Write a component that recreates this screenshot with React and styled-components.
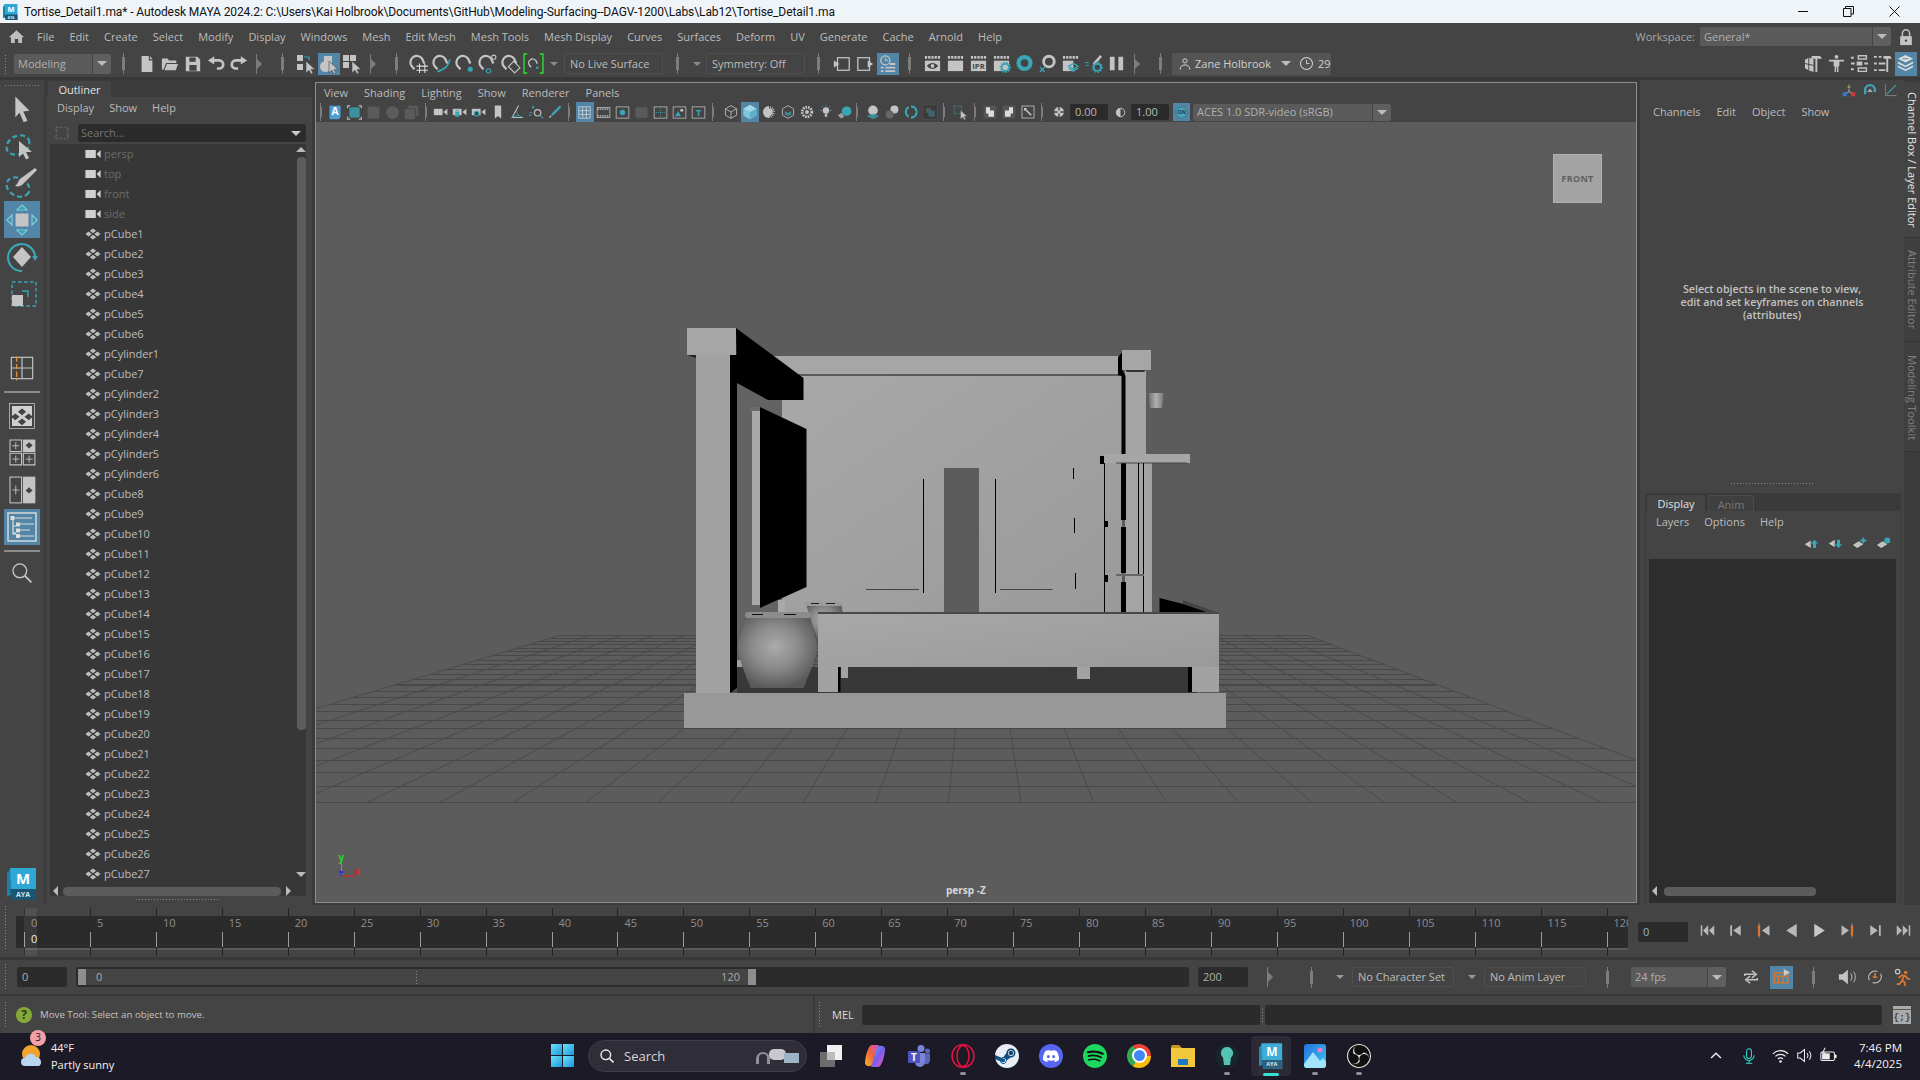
import React from "react";
import styled, { createGlobalStyle } from "styled-components";
import { SiDiscord, SiSpotify, SiSteam, SiObsstudio } from "react-icons/si";

const L = "#c4c4c4";
const T = "#3aa5b6";
const O = "#d9772f";

const GlobalStyle = createGlobalStyle`
  html, body { margin: 0; padding: 0; background: #444; overflow: hidden; }
  * { box-sizing: border-box; }
`;

const Page = styled.div`
  width: 1920px;
  height: 1080px;
  display: flex;
  flex-direction: column;
  overflow: hidden;
  background: #444;
  color: #bcbcbc;
  font: 11px/14px "Open Sans", sans-serif;
`;

/* window chrome */
const TitleBar = styled.div`
  flex: none;
  height: 23px;
  display: flex;
  align-items: center;
  padding-left: 3px;
  background: #eff4f9;
  color: #111;
  font: 12px/16px "Roboto", sans-serif;
`;
const TitleText = styled.span`
  margin-left: 6px;
  letter-spacing: -0.1px;
`;
const WinControls = styled.div`
  margin-left: auto;
  display: flex;
  margin-right: 20px;
  gap: 35px;
`;

const MenuBar = styled.div`
  flex: none;
  height: 26px;
  display: flex;
  align-items: center;
  padding: 1px 0 0 8px;
`;
const Menus = styled.div`
  display: flex;
  gap: ${(p) => p.$gap || 15}px;
  margin-left: ${(p) => p.$ml || 0}px;
  color: ${(p) => p.$color || "#bcbcbc"};
`;
const WorkspaceLabel = styled.span`
  margin-left: auto;
  color: #a8a8a8;
`;
const Dropdown = styled.div`
  flex: none;
  display: flex;
  width: ${(p) => p.$w}px;
  height: ${(p) => p.$h || 20}px;
  margin-left: ${(p) => p.$ml || 0}px;
  border-radius: 2px;
  overflow: hidden;
  color: #b0b0b0;
`;
const DropLabel = styled.div`
  flex: 1;
  display: flex;
  align-items: center;
  padding-left: 4px;
  background: #5a5a5a;
`;
const DropCaret = styled.div`
  flex: none;
  width: 18px;
  margin-left: 1px;
  display: flex;
  align-items: center;
  justify-content: center;
  background: #5f5f5f;
`;
const Caret = styled.div`
  flex: none;
  margin-left: ${(p) => p.$ml || 0}px;
  width: 0;
  height: 0;
  border-left: ${(p) => p.$s || 5}px solid transparent;
  border-right: ${(p) => p.$s || 5}px solid transparent;
  border-top: ${(p) => p.$s || 5}px solid ${(p) => p.$c || "#bbb"};
`;
const Lock = styled.div`
  margin: 0 5px 0 6px;
  display: flex;
`;

const Toolbar = styled.div`
  flex: none;
  height: 28px;
  display: flex;
  align-items: center;
  padding-top: 1px;
`;
const Grip = styled.div`
  flex: none;
  width: 3px;
  height: ${(p) => p.$h || 20}px;
  margin-left: ${(p) => p.$ml || 0}px;
  background-image: radial-gradient(#8a8a8a 0.7px, transparent 0.8px);
  background-size: 3px 3px;
`;
const HGrip = styled.div`
  flex: none;
  width: ${(p) => p.$w}px;
  height: 3px;
  margin: ${(p) => p.$m || "0"};
  background-image: radial-gradient(#858585 0.7px, transparent 0.8px);
  background-size: 3px 3px;
`;
const Sep = styled.div`
  flex: none;
  position: relative;
  width: ${(p) => p.$w || 3}px;
  height: ${(p) => p.$h || 13}px;
  margin-left: ${(p) => p.$ml || 0}px;
  background: #7c7c7c;
  &::after {
    content: "";
    position: absolute;
    left: ${(p) => ((p.$w || 3) === 3 ? 1 : 0)}px;
    top: -4px;
    bottom: -4px;
    width: 1px;
    background: #7c7c7c;
  }
`;
const Notch = styled.div`
  flex: none;
  position: relative;
  width: 8px;
  height: 20px;
  margin-left: ${(p) => p.$ml || 0}px;
  &::before {
    content: "";
    position: absolute;
    left: 1px;
    top: 0;
    bottom: 0;
    width: 1px;
    background: #7c7c7c;
  }
  &::after {
    content: "";
    position: absolute;
    left: 2px;
    top: 5px;
    border-left: 5px solid #7c7c7c;
    border-top: 5px solid transparent;
    border-bottom: 5px solid transparent;
  }
`;
const Tool = styled.div`
  flex: none;
  display: flex;
  align-items: center;
  justify-content: center;
  width: ${(p) => p.$w || 23}px;
  height: ${(p) => p.$h || 22}px;
  margin-left: ${(p) => p.$ml || 0}px;
`;
const ActiveBack = styled.div`
  display: flex;
  align-items: center;
  justify-content: center;
  width: ${(p) => p.$w}px;
  height: ${(p) => p.$h}px;
  background: #5285a6;
`;
const Group = styled.div`
  flex: none;
  display: flex;
  align-items: center;
  margin-left: ${(p) => p.$ml || 0}px;
  margin-right: ${(p) => p.$mr || 0}px;
`;
const FieldOutline = styled.div`
  flex: none;
  display: flex;
  align-items: center;
  width: ${(p) => p.$w}px;
  height: ${(p) => p.$h || 21}px;
  margin-left: ${(p) => p.$ml || 0}px;
  padding-left: 5px;
  border: 1px solid #4f4f4f;
  border-radius: 3px;
`;
const Profile = styled.div`
  flex: none;
  display: flex;
  align-items: center;
  width: 159px;
  height: 22px;
  margin-left: 10px;
  padding-left: 6px;
  background: #545454;
  color: #d0d0d0;
`;
const ProfileName = styled.span`
  margin-left: 3px;
  width: 86px;
`;
const Clock = styled.div`
  margin-left: 8px;
  display: flex;
`;
const ClockCount = styled.span`
  margin-left: 4px;
`;
const TopLine = styled.div`
  flex: none;
  height: 3px;
  background: #383838;
`;

/* main row */
const Main = styled.div`
  flex: none;
  height: 825px;
  display: flex;
  background: #3b3b3b;
`;
const Toolbox = styled.div`
  flex: none;
  width: 44px;
  margin-right: 2px;
  display: flex;
  flex-direction: column;
  align-items: center;
  background: #444;
  padding-top: 4px;
`;
const BoxSlot = styled.div`
  flex: none;
  width: 36px;
  height: ${(p) => p.$h || 36}px;
  margin-top: ${(p) => p.$mt || 0}px;
  display: flex;
  align-items: center;
  justify-content: center;
  background: ${(p) => (p.$on ? "#5285a6" : "transparent")};
`;
const BoxRule = styled.div`
  flex: none;
  width: 36px;
  height: 2px;
  margin-top: ${(p) => p.$mt || 0}px;
  background: #8a8a8a;
`;
const BoxLogo = styled.div`
  margin-top: auto;
  margin-bottom: 5px;
  display: flex;
`;

const Outliner = styled.div`
  flex: none;
  width: 266px;
  display: flex;
  flex-direction: column;
`;
const PanelTabs = styled.div`
  flex: none;
  height: ${(p) => p.$h}px;
  display: flex;
  align-items: flex-end;
  gap: 3px;
  padding-left: ${(p) => p.$pl || 0}px;
`;
const PanelTab = styled.div`
  height: 16px;
  width: ${(p) => p.$w}px;
  display: flex;
  align-items: center;
  justify-content: center;
  padding-top: 2px;
  border-radius: 3px 3px 0 0;
  background: ${(p) => (p.$on ? "#444" : "#3f3f3f")};
  color: ${(p) => (p.$on ? "#e2e2e2" : "#777")};
  border: ${(p) => (p.$on ? "none" : "1px solid #4c4c4c")};
  border-bottom: none;
`;
const OutlinerBody = styled.div`
  flex: 1;
  display: flex;
  flex-direction: column;
  background: #444;
`;
const PanelMenu = styled.div`
  flex: none;
  height: ${(p) => p.$h || 22}px;
  display: flex;
  align-items: center;
  padding-left: ${(p) => p.$pl}px;
`;
const SearchRow = styled.div`
  flex: none;
  height: 25px;
  display: flex;
  align-items: center;
  padding: 3px 0 0 8px;
`;
const SearchField = styled.div`
  width: 228px;
  height: 18px;
  margin-left: 8px;
  display: flex;
  align-items: center;
  justify-content: space-between;
  padding: 0 5px 0 3px;
  border-radius: 3px;
  background: #2b2b2b;
  color: #757575;
`;
const List = styled.div`
  position: relative;
  flex: none;
  width: 256px;
  height: 752px;
  margin-left: 4px;
  background: #373737;
  overflow: hidden;
`;
const Row = styled.div`
  height: 20px;
  display: flex;
  align-items: center;
  padding-left: 35px;
  color: ${(p) => (p.$dim ? "#6c6c6c" : "#bcbcbc")};
`;
const RowLabel = styled.span`
  margin-left: 3px;
`;
const VScroll = styled.div`
  position: absolute;
  top: 0;
  right: 0;
  bottom: 10px;
  width: 10px;
  background: #373737;
`;
const VThumb = styled.div`
  margin: 13px 0 0 0.5px;
  width: 9px;
  height: 573px;
  border-radius: 4px;
  background: #5c5c5c;
`;
const ArrowUp = styled.div`
  position: absolute;
  top: 3px;
  left: 0;
  border-left: 5px solid transparent;
  border-right: 5px solid transparent;
  border-bottom: 5px solid #bbb;
`;
const ArrowDown = styled.div`
  position: absolute;
  bottom: 9px;
  left: 0;
  border-left: 5px solid transparent;
  border-right: 5px solid transparent;
  border-top: 5px solid #bbb;
`;
const HScroll = styled.div`
  position: absolute;
  left: 0;
  right: ${(p) => p.$r ?? 10}px;
  bottom: ${(p) => p.$b || 0}px;
  height: 10px;
  display: flex;
  align-items: center;
  padding-left: 3px;
  gap: ${(p) => p.$gap || 5}px;
`;
const HThumb = styled.div`
  width: ${(p) => p.$w}px;
  height: 9px;
  border-radius: 4px;
  background: #5c5c5c;
`;
const ArrowLeft = styled.div`
  flex: none;
  border-top: 5px solid transparent;
  border-bottom: 5px solid transparent;
  border-right: 5px solid #bbb;
`;
const ArrowRight = styled.div`
  flex: none;
  border-top: 5px solid transparent;
  border-bottom: 5px solid transparent;
  border-left: 5px solid #bbb;
`;

const Viewport = styled.div`
  flex: none;
  width: 1322px;
  margin: 2px 0 2px 3px;
  display: flex;
  flex-direction: column;
  border: 1px solid #8d8d8d;
  background: #444;
`;
const ViewMenu = styled.div`
  flex: none;
  height: 19px;
  display: flex;
  align-items: center;
  padding-left: 8px;
`;
const ViewBar = styled.div`
  flex: none;
  height: 20px;
  display: flex;
  align-items: center;
  padding-left: 4px;
`;
const NumField = styled.div`
  flex: none;
  width: 38px;
  height: 16px;
  margin-left: ${(p) => p.$ml || 0}px;
  display: flex;
  align-items: center;
  padding-left: 5px;
  border-radius: 2px;
  background: #2b2b2b;
  color: #b8b8b8;
`;
const Canvas = styled.div`
  position: relative;
  flex: 1;
  background: #5c5c5c;
  overflow: hidden;
  svg {
    display: block;
  }
`;
const ViewCube = styled.div`
  position: absolute;
  top: 32px;
  right: 34px;
  width: 49px;
  height: 49px;
  display: flex;
  align-items: center;
  justify-content: center;
  background: #a3a3a3;
  border: 1px solid #b0b0b0;
  color: #606060;
  font-size: 9px;
  font-weight: 700;
  letter-spacing: 0.3px;
`;
const ViewName = styled.div`
  position: absolute;
  left: 630px;
  bottom: 5px;
  color: #d8d8d8;
  font-size: 10px;
  font-weight: 700;
`;

const RightPanel = styled.div`
  flex: none;
  width: 264px;
  margin-left: 3px;
  display: flex;
  flex-direction: column;
  background: #444;
`;
const ChannelBox = styled.div`
  flex: none;
  height: 413px;
  display: flex;
  flex-direction: column;
  align-items: stretch;
`;
const ChannelIcons = styled.div`
  flex: none;
  height: 20px;
  display: flex;
  align-items: center;
  justify-content: flex-end;
  gap: 7px;
  padding-right: 6px;
`;
const ChannelHint = styled.div`
  margin-top: 159px;
  text-align: center;
  font-size: 10.7px;
  font-weight: 600;
  line-height: 13px;
  color: #c2c2c2;
`;
const LayerBox = styled.div`
  flex: 1;
  display: flex;
  flex-direction: column;
  margin: 0 3px 2px 5px;
  background: #3a3a3a;
`;
const LayerBody = styled.div`
  flex: 1;
  display: flex;
  flex-direction: column;
  background: #444;
  border-left: 1px solid #3a3a3a;
  border-right: 1px solid #3a3a3a;
`;
const LayerIcons = styled.div`
  flex: none;
  height: 26px;
  padding: 0 9px 5px 0;
  display: flex;
  align-items: center;
  justify-content: flex-end;
  gap: 9px;
`;
const LayerList = styled.div`
  position: relative;
  flex: 1;
  margin: 0 4px 0 3px;
  background: #2d2d2d;
`;
const VTabs = styled.div`
  flex: none;
  width: 16px;
  padding-top: 2px;
  display: flex;
  flex-direction: column;
  background: #3b3b3b;
`;
const VTab = styled.div`
  flex: none;
  height: ${(p) => p.$h}px;
  padding-top: ${(p) => p.$pt}px;
  writing-mode: vertical-rl;
  display: flex;
  align-items: center;
  border-radius: 0 3px 3px 0;
  background: ${(p) => (p.$on ? "#444" : "#3f3f3f")};
  border-bottom: 1px solid #333;
  color: ${(p) => (p.$on ? "#e4e4e4" : "#808080")};
  white-space: nowrap;
`;

/* timeline */
const TimeRow = styled.div`
  flex: none;
  height: 52px;
  display: flex;
  align-items: flex-start;
`;
const Ruler = styled.div`
  position: relative;
  flex: none;
  width: 1612px;
  height: 48px;
  margin: 3px 0 0 9px;
  overflow: hidden;
  color: #8e8e8e;
`;
const RulerLine = styled.div`
  display: flex;
  height: ${(p) => p.$h}px;
  padding-left: 8px;
  background: ${(p) => p.$bg};
`;
const StripCell = styled.div`
  flex: 0 0 65.95px;
  height: 100%;
  border-left: 1px solid #222;
  background: ${(p) => (p.$bar ? "linear-gradient(#5a5a5a 0 2px, transparent 2px)" : "none")};
`;
const RulerCell = styled.div`
  position: relative;
  flex: 0 0 65.95px;
  padding-left: 7px;
  &::after {
    content: "";
    position: absolute;
    left: 0;
    bottom: 1px;
    width: 1px;
    height: 15px;
    background: #9c9c9c;
  }
`;
const CurrentMark = styled.div`
  position: absolute;
  left: 8px;
  top: 0;
  bottom: 0;
  width: 13px;
  background: rgba(255, 255, 255, 0.07);
`;
const CurrentLabel = styled.div`
  position: absolute;
  left: 15px;
  top: 24px;
  color: #eee;
`;
const FrameField = styled.div`
  flex: none;
  width: 50px;
  height: 20px;
  margin-left: ${(p) => p.$ml || 0}px;
  margin-top: ${(p) => p.$mt || 0}px;
  display: flex;
  align-items: center;
  padding-left: 5px;
  border-radius: 2px;
  background: #2b2b2b;
  color: ${(p) => p.$c || "#b0b0b0"};
`;
const Transport = styled.div`
  flex: none;
  display: flex;
  margin: 15px 0 0 5px;
`;
const RangeRow = styled.div`
  flex: none;
  height: 37px;
  display: flex;
  align-items: center;
  border-top: 3px solid #383838;
`;
const RangeTrack = styled.div`
  flex: none;
  width: 1113px;
  height: 20px;
  margin-left: 9px;
  padding: 2px 0 2px 2px;
  border-radius: 2px;
  background: #2b2b2b;
`;
const RangeBar = styled.div`
  width: 678px;
  height: 16px;
  display: flex;
  align-items: center;
  justify-content: space-between;
  background: #444;
`;
const RangeHandle = styled.div`
  flex: none;
  width: 8px;
  height: 16px;
  background: #8e8e8e;
`;
const RangeValue = styled.span`
  margin: ${(p) => p.$m};
  color: #aaa;
`;
const CommandRow = styled.div`
  flex: none;
  height: 39px;
  display: flex;
  align-items: center;
  border-top: 2px solid #383838;
`;
const HelpLine = styled.div`
  flex: none;
  width: 815px;
  height: 37px;
  display: flex;
  align-items: center;
  padding-left: 4px;
  border-right: 2px solid #383838;
  margin-right: 3px;
`;
const HelpDot = styled.div`
  flex: none;
  width: 16px;
  height: 16px;
  margin-left: 9px;
  display: flex;
  align-items: center;
  justify-content: center;
  border-radius: 50%;
  background: #86a83a;
  color: #2c3a10;
  font-size: 12px;
  font-weight: 700;
`;
const HelpText = styled.span`
  margin-left: 8px;
  font-size: 9.7px;
  color: #c2c2c2;
`;
const MelLabel = styled.span`
  margin-left: 11px;
  color: #ddd;
`;
const MelInput = styled.div`
  flex: none;
  width: ${(p) => p.$w}px;
  height: 20px;
  margin-left: ${(p) => p.$ml || 0}px;
  border-radius: 2px;
  background: #2b2b2b;
`;

/* windows taskbar */
const Taskbar = styled.div`
  flex: 1;
  display: flex;
  align-items: center;
  padding-bottom: 2px;
  background: #1c1a26;
  color: #f2f2f2;
`;
const Weather = styled.div`
  position: relative;
  flex: none;
  width: 551px;
  display: flex;
  align-items: center;
  padding-left: 20px;
  line-height: 17px;
`;
const Badge = styled.div`
  position: absolute;
  left: 30px;
  top: -9px;
  width: 16px;
  height: 16px;
  display: flex;
  align-items: center;
  justify-content: center;
  border-radius: 50%;
  background: #f4a0a8;
  color: #2a1a1e;
  font-size: 10px;
`;
const WeatherText = styled.div`
  margin-left: 7px;
`;
const StartGrid = styled.div`
  flex: none;
  width: 23px;
  height: 23px;
  display: grid;
  grid-template-columns: 1fr 1fr;
  gap: 1px;
`;
const StartPane = styled.div`
  background: linear-gradient(135deg, #6ee0f8, #1a9ade);
`;
const SearchPill = styled.div`
  flex: none;
  width: 219px;
  height: 32px;
  margin-left: 14px;
  display: flex;
  align-items: center;
  padding-left: 11px;
  border: 1px solid #3d3c47;
  border-radius: 16px;
  background: #2e2d38;
  color: #d8d8d8;
  font-size: 13px;
`;
const PillLabel = styled.span`
  margin-left: 10px;
  width: 130px;
`;
const TaskIcons = styled.div`
  flex: none;
  display: flex;
  margin-left: 2px;
`;
const TaskIcon = styled.div`
  position: relative;
  flex: none;
  width: 44px;
  height: 42px;
  display: flex;
  align-items: center;
  justify-content: center;
  &::before {
    content: "";
    position: absolute;
    inset: 1px 2px;
    border-radius: 4px;
    background: ${(p) => (p.$on ? "rgba(255,255,255,0.07)" : "transparent")};
  }
`;
const TaskDot = styled.div`
  position: absolute;
  left: 50%;
  bottom: ${(p) => (p.$on ? 1 : 2)}px;
  width: ${(p) => (p.$on ? 16 : 6)}px;
  height: 3px;
  margin-left: ${(p) => (p.$on ? -8 : -3)}px;
  border-radius: 2px;
  background: ${(p) => (p.$on ? "#35e0d0" : "#8f8f96")};
`;
const Tray = styled.div`
  flex: none;
  margin-left: ${(p) => p.$ml}px;
  display: flex;
`;
const TimeBlock = styled.div`
  flex: none;
  width: 50px;
  margin-left: 15px;
  text-align: right;
  font-size: 11.5px;
  line-height: 16px;
`;
const ChromeBall = styled.div`
  position: relative;
  width: 24px;
  height: 24px;
  border-radius: 50%;
  background: conic-gradient(from -30deg, #ea4335 0 120deg, #fbbc05 120deg 240deg, #34a853 240deg 360deg);
  &::after {
    content: "";
    position: absolute;
    inset: 6.5px;
    border-radius: 50%;
    background: #4285f4;
    box-shadow: 0 0 0 2px #fff;
  }
`;
const RoundIcon = styled.div`
  width: 24px;
  height: 24px;
  display: flex;
  align-items: center;
  justify-content: center;
  border-radius: 50%;
  background: ${(p) => p.$bg};
`;

const cursor = <path d="M10 7v12l3-2.7 2 3.7 2-1-2-3.6h4z" fill={L} stroke="#444" strokeWidth=".6" />;
const clap = <path d="M2 3.5H18" stroke={L} strokeWidth="3" strokeDasharray="2.4 1" />;
const cam = (
  <>
    <rect x="1" y="6" width="11" height="8" fill={L} />
    <path d="M13 10l5-4v8z" fill={L} />
  </>
);
const magnet = <path d="M6.2 15.5 3.4 12.4A6 6 0 1 1 13.4 5.4L15.6 10" fill="none" stroke={L} strokeWidth="2.1" />;
const gear = (c) => (
  <>
    <circle cx="14" cy="14" r="3.8" fill="none" stroke={c} strokeWidth="2" />
    <circle cx="14" cy="14" r="5.3" fill="none" stroke={c} strokeWidth="1.2" strokeDasharray="1.6 1.6" />
  </>
);

const ICONS = {
  home: <path d="M10 2.5 1 11h2.5v6.5H8V13h4v4.5h4.5V11H19z" fill="#bdbdbd" />,
  fnew: <path d="M4 1h8v5h4v13H4zM13.2 1l3 3.6h-3z" fill={L} />,
  fopen: <path d="M1 4h6l2 2h8v3H5.5L3 16H1zM6.5 10H19l-2.6 7H3.8z" fill={L} />,
  fsave: <path fillRule="evenodd" d="M2 2h13l3 3v13H2zM6 2.8v4.7h7V2.8zM6 11v6.5h8V11z" fill={L} />,
  undo: (
    <>
      <path d="M7 6h6.5a4.5 4.5 0 0 1 0 9H11" stroke={L} strokeWidth="3" fill="none" />
      <path d="M8 1.5v9L1 6z" fill={L} />
    </>
  ),
  redo: (
    <g transform="matrix(-1 0 0 1 20 0)">
      <path d="M7 6h6.5a4.5 4.5 0 0 1 0 9H11" stroke={L} strokeWidth="3" fill="none" />
      <path d="M8 1.5v9L1 6z" fill={L} />
    </g>
  ),
  selHier: (
    <>
      <rect x="1" y="1" width="6" height="6" fill={L} />
      <rect x="1" y="10" width="6" height="6" fill={L} />
      <path d="M8 3h5v3" fill="none" stroke={T} strokeWidth="1.2" />
      {cursor}
    </>
  ),
  selObj: (
    <>
      <circle cx="6.5" cy="12.5" r="5.5" fill={L} />
      <rect x="5" y="2" width="8" height="7" fill={L} />
      {cursor}
    </>
  ),
  selComp: (
    <>
      <path d="M1 1h6v6H1zM8 1h6v6H8zM1 8h6v6H1z" fill={L} />
      {cursor}
    </>
  ),
  snapGrid: (
    <>
      {magnet}
      <path d="M11 10v9M16 10v9M8 12.5h11M8 16.5h11" stroke="#ddd" strokeWidth="1" />
    </>
  ),
  snapCurve: (
    <>
      {magnet}
      <path d="M6 18c3-2 10-2 12-12" fill="none" stroke={T} strokeWidth="1.6" />
    </>
  ),
  snapPoint: (
    <>
      {magnet}
      <circle cx="15.5" cy="15.5" r="2.4" fill={T} />
    </>
  ),
  snapView: (
    <>
      {magnet}
      <circle cx="16" cy="4" r="2" fill="none" stroke={L} />
      <circle cx="11" cy="17" r="2" fill="none" stroke={T} />
    </>
  ),
  snapSurf: (
    <>
      {magnet}
      <path d="M8 13l5-5 6 6-5 5z" fill="none" stroke={L} strokeWidth="1.1" />
    </>
  ),
  snapLive: (
    <>
      <path d="M4 1H1v18h3M16 1h3v18h-3" fill="none" stroke="#2fe02f" strokeWidth="1.3" />
      <g transform="translate(4 4) scale(.62)">{magnet}</g>
      <circle cx="13.5" cy="14" r="1.2" fill={T} />
    </>
  ),
  frameIn: (
    <>
      <rect x="5" y="3" width="13" height="14" fill="none" stroke={L} strokeWidth="1.4" />
      <path d="M1 6l6 4-6 4z" fill={L} />
    </>
  ),
  frameOut: (
    <>
      <rect x="2" y="3" width="13" height="14" fill="none" stroke={L} strokeWidth="1.4" />
      <path d="M13 6l6 4-6 4z" fill={L} />
    </>
  ),
  history: (
    <>
      <circle cx="7" cy="6" r="5" fill="none" stroke={L} strokeWidth="1.4" />
      <path d="M7 3v3h3" fill="none" stroke={L} />
      <path d="M2 13h3v2H2zM7 13h11v2H7zM2 17h3v2H2zM7 17h11v2H7zM12 9h6v2h-6z" fill={L} />
    </>
  ),
  clapEye: (
    <>
      {clap}
      <rect x="2" y="7" width="16" height="11" fill={L} />
      <path d="M4 12.5c4-4 8-4 12 0-4 4-8 4-12 0z" fill="#444" />
      <circle cx="10" cy="12.5" r="2" fill={L} />
    </>
  ),
  clapBlank: (
    <>
      {clap}
      <rect x="2" y="7" width="16" height="11" fill={L} />
    </>
  ),
  clapIpr: (
    <>
      {clap}
      <rect x="2" y="7" width="16" height="11" fill={L} />
      <text x="10" y="16" textAnchor="middle" fontSize="8" fontFamily="Open Sans" fontWeight="700" fill="#444">IPR</text>
    </>
  ),
  clapGear: (
    <>
      {clap}
      <rect x="2" y="7" width="16" height="11" fill={L} />
      {gear(T)}
    </>
  ),
  ringT: <circle cx="10" cy="9.5" r="6.3" fill="none" stroke={T} strokeWidth="4.4" />,
  ringX: (
    <>
      <circle cx="11.5" cy="8" r="5.6" fill="none" stroke={L} strokeWidth="3" />
      <path d="M2 14l5 5M7 14l-5 5" stroke={T} strokeWidth="1.3" />
    </>
  ),
  clapTeal: (
    <>
      {clap}
      <rect x="2" y="7" width="11" height="11" fill={L} />
      <path d="M8 13l5-3 5 3-5 3zM8 15l5 3 5-3" fill="none" stroke={T} strokeWidth="1.5" />
    </>
  ),
  wrench: (
    <>
      <path d="M17 1l2 2-8 9-2-2z" fill={L} />
      <path d="M1 9h4M2 12h3" stroke={T} />
      {gear(T)}
    </>
  ),
  pause: <path d="M3 3h5v14H3zM12 3h5v14h-5z" fill={L} />,
  person: (
    <>
      <circle cx="10" cy="5.5" r="3" fill="none" stroke="#d4d4d4" strokeWidth="1.4" />
      <path d="M3 18c0-9 14-9 14 0" fill="none" stroke="#d4d4d4" strokeWidth="1.4" />
    </>
  ),
  clock: (
    <>
      <circle cx="10" cy="10" r="8" fill="none" stroke="#d4d4d4" strokeWidth="1.4" />
      <path d="M10 5v5h4" fill="none" stroke="#d4d4d4" strokeWidth="1.2" />
    </>
  ),
  lock: (
    <>
      <path d="M6 9V6a4 4 0 0 1 8 0v3" fill="none" stroke={L} strokeWidth="1.6" />
      <rect x="3.5" y="9" width="13" height="10" fill={L} />
      <circle cx="10" cy="14" r="1.3" fill="#444" />
    </>
  ),
  modelRel: (
    <>
      <path d="M1 6l4-2 5 1v14l-5-2-4-2z" fill={L} />
      <path d="M5 4v13M1 10l9 2" stroke="#444" />
      <path d="M8 2h9l2 3h-5v14h-2V5H8z" fill={L} />
    </>
  ),
  human: (
    <>
      <circle cx="10" cy="3" r="2" fill={L} />
      <path d="M2 6h16v2h-5v5h-1v6h-1.5v-5h-1v5H8v-6H7V8H2z" fill={L} />
    </>
  ),
  sliders: (
    <>
      <path d="M1 3h3v2H1zM8 1h10v5H8zM9.5 2.5h7v2h-7z" fill={L} fillRule="evenodd" />
      <path d="M1 9h4v2H1zM7 8h6v4H7zM15 9h4v2h-4z" fill={L} />
      <path d="M1 15h3v2H1zM8 14h10v5H8zM9.5 15.5h7v2h-7z" fill={L} fillRule="evenodd" />
    </>
  ),
  tools: (
    <>
      <path d="M1 2h3v2H1zM1 9h3v2H1zM1 16h3v2H1zM6 2h3v2H6zM6 9h7v2H6zM6 16h7v2H6z" fill={L} />
      <path d="M11 2h7l2 3h-4v14h-2V5h-3z" fill={L} />
    </>
  ),
  layersOn: (
    <>
      <path d="M10 1l8 4-8 4-8-4z" fill="#ddd" />
      <path d="M2 8l8 4 8-4v2l-8 4-8-4zM2 12l8 4 8-4v2l-8 4-8-4z" fill="#ddd" />
      <path d="M7 5h6" stroke="#5285a6" />
    </>
  ),
  aBtn: (
    <>
      <path d="M3 2h13v13l-2 3H3z" fill="#4e9ed2" />
      <text x="9.5" y="13" textAnchor="middle" fontSize="12" fontWeight="700" fontFamily="Open Sans" fill="#fff">A</text>
    </>
  ),
  frame: (
    <>
      <rect x="4" y="4" width="12" height="12" fill={T} opacity=".8" />
      <path d="M2 5V2h3M15 2h3v3M18 15v3h-3M5 18H2v-3" fill="none" stroke={L} strokeWidth="1.3" />
    </>
  ),
  dimBox: <rect x="3" y="3" width="14" height="14" fill="#5b5b5b" />,
  dimCircle: <circle cx="10" cy="10" r="7.5" fill="#5c5c5c" />,
  dimStack: <path d="M2 6h12v12H2zM6 2h12v12h-3V5H6z" fill="#5a5a5a" />,
  cam,
  camLock: (
    <>
      {cam}
      <rect x="4" y="10" width="5" height="6" fill={T} />
      <path d="M5 10V8h3v2" fill="none" stroke={T} />
    </>
  ),
  camGear: (
    <>
      {cam}
      <circle cx="7" cy="12" r="3" fill="#444" stroke={T} strokeWidth="1.4" />
    </>
  ),
  bookmark: <path d="M6 2h8v16l-4-3-4 3z" fill={L} />,
  persp: (
    <>
      <path d="M12 2l-8 15h13" fill="none" stroke={L} strokeWidth="1.3" />
      <path d="M3 17l8-3 7 3M9 9l3 6" stroke={T} fill="none" />
    </>
  ),
  focus: (
    <>
      <circle cx="12" cy="11" r="4" fill="none" stroke={L} strokeWidth="1.5" />
      <path d="M15 14l4 4M8 4h-2M6 2v4M2 11h3M1 14h3" stroke={T} strokeWidth="1.3" />
    </>
  ),
  pen: (
    <>
      <path d="M16 2l2 2-10 10-3 1 1-3z" fill={T} />
      <path d="M3 17l2-2" stroke={L} strokeWidth="1.5" />
    </>
  ),
  gridB: (
    <>
      <rect x="2.5" y="2.5" width="15" height="15" fill="none" stroke="#ddd" />
      <path d="M7.5 3v14M12.5 3v14M3 7.5h14M3 12.5h14" stroke="#ddd" />
    </>
  ),
  film: (
    <>
      <rect x="1.5" y="3.5" width="17" height="13" fill="none" stroke={L} />
      <path d="M2 5.5h16M2 14.5h16" stroke={L} strokeWidth="1.4" strokeDasharray="2 1" />
    </>
  ),
  resGate: (
    <>
      <rect x="1.5" y="2.5" width="17" height="15" fill="none" stroke={L} />
      <circle cx="10" cy="10" r="3.6" fill={T} />
    </>
  ),
  darkBox: <rect x="2" y="3" width="16" height="14" rx="2" fill="#5a5a5a" />,
  axisBox: (
    <>
      <rect x="1.5" y="2.5" width="17" height="15" fill="none" stroke={L} />
      <path d="M10 4v12M4 10h12" stroke={T} strokeDasharray="1.4 1.2" />
    </>
  ),
  picBox: (
    <>
      <rect x="1.5" y="2.5" width="17" height="15" fill="none" stroke={L} />
      <path d="M4 15l4-7 4 7z" fill={T} />
      <circle cx="13" cy="7" r="2" fill={L} />
    </>
  ),
  tBox: (
    <>
      <rect x="1.5" y="2.5" width="17" height="15" fill="none" stroke={L} />
      <text x="10" y="15" textAnchor="middle" fontSize="12" fontWeight="700" fontFamily="Open Sans" fill={T}>T</text>
    </>
  ),
  wire: <path d="M10 2l7 4v8l-7 4-7-4V6zM3 6l7 4 7-4M10 10v8" fill="none" stroke={L} strokeWidth="1" />,
  shade: (
    <>
      <path d="M10 1l8 4.5v9L10 19l-8-4.5v-9z" fill="#9fd9e8" />
      <path d="M2 5.5L10 10v9l-8-4.5z" fill="#7ec5d8" />
      <path d="M18 5.5L10 10v9l8-4.5z" fill="#5fb0c6" />
    </>
  ),
  halfDots: (
    <>
      <circle cx="10" cy="10" r="7.5" fill={L} />
      <path d="M10 3a7 7 0 0 1 0 14" fill="none" stroke="#444" strokeWidth="5" strokeDasharray="1.5 1.2" />
    </>
  ),
  boxDots: (
    <>
      <path d="M10 2l7 4v8l-7 4-7-4V6z" fill="none" stroke={L} />
      <path d="M6 9l4 2 4-2v4l-4 2-4-2z" fill={T} opacity=".7" />
    </>
  ),
  checker: (
    <>
      <circle cx="10" cy="10" r="6" fill="none" stroke={L} strokeWidth="3.6" strokeDasharray="2 1.2" />
      <circle cx="10" cy="10" r="2.4" fill={L} />
    </>
  ),
  bulb: (
    <>
      <circle cx="10" cy="8" r="4" fill={L} />
      <path d="M8.5 12h3v4h-3z" fill={L} />
      <path d="M10 1v1M3 8h2M15 8h2M5 3l1 1M15 3l-1 1" stroke={T} strokeWidth="1.3" />
    </>
  ),
  shadow: (
    <>
      <circle cx="12" cy="9" r="6" fill={T} />
      <path d="M1 14l5-3 3 5-4 2z" fill={L} opacity=".7" />
    </>
  ),
  ball: (
    <>
      <circle cx="10" cy="8" r="6" fill={L} />
      <path d="M2 15l8 4 8-4-8-3z" fill={T} opacity=".7" />
    </>
  ),
  ball2: (
    <>
      <circle cx="13" cy="7" r="5" fill={L} />
      <circle cx="7" cy="13" r="5" fill="#666" />
    </>
  ),
  ringSplit: <path d="M10 3a7 7 0 0 1 0 14M7 16a7 7 0 0 1 0-12" fill="none" stroke={T} strokeWidth="2.6" />,
  xray: (
    <>
      <rect x="1" y="1" width="18" height="18" fill="#3a3a3a" stroke="#505050" />
      <path d="M5 5h6v6H5z" fill="#565656" />
      <rect x="8" y="8" width="8" height="8" fill="#3f6670" />
    </>
  ),
  dashCursor: (
    <>
      <rect x="1.5" y="1.5" width="10" height="10" fill="none" stroke={T} strokeDasharray="2 1.5" />
      {cursor}
    </>
  ),
  isoA: (
    <>
      <rect x="2" y="2" width="16" height="16" fill="#555" />
      <path d="M10 4H5v8h3v4h7V8h-5z" fill="#ddd" />
    </>
  ),
  isoB: (
    <>
      <rect x="2" y="2" width="16" height="16" fill="#555" />
      <path d="M15 4h-5v4H5v8h7v-4h3z" fill="#ddd" />
    </>
  ),
  isoC: (
    <>
      <rect x="2.5" y="2.5" width="15" height="15" fill="#444" stroke={L} />
      <path d="M6 6l8 8" stroke={L} strokeWidth="2" />
      <path d="M5 5h4L5 9z" fill={L} />
    </>
  ),
  aperture: (
    <>
      <circle cx="10" cy="10" r="7" fill={L} />
      <path d="M10 3v5M17 10h-5M10 17v-5M3 10h5" stroke="#444" strokeWidth="2" />
    </>
  ),
  half: (
    <>
      <circle cx="10" cy="10" r="6.5" fill="none" stroke={L} strokeWidth="1.5" />
      <path d="M10 3.5a6.5 6.5 0 0 0 0 13z" fill={L} />
    </>
  ),
  onBtn: (
    <>
      <circle cx="10" cy="10" r="7.5" fill="#4aa3b5" stroke="#2d6c7c" />
      <text x="10" y="12.6" textAnchor="middle" fontSize="7" fontWeight="700" fontFamily="Open Sans" fill="#193c46">ON</text>
    </>
  ),
  triAxis: (
    <>
      <path d="M10 8v4M5 16l5-4 5 4" stroke="#ddd" fill="none" />
      <path d="M10 1l2.4 6H7.6z" fill="#7aa83c" />
      <path d="M1 13h6v6H1z" fill="#3a73c9" />
      <path d="M13 13h6v6h-6z" fill="#c8403c" />
    </>
  ),
  tealArc: (
    <>
      <path d="M3 16V10a7 7 0 0 1 14 0v3" fill="none" stroke={T} strokeWidth="3.4" />
      <path d="M10 8l4 5h-8z" fill="#aaa" />
    </>
  ),
  corner: (
    <>
      <path d="M2 2v16h16" fill="none" stroke="#999" />
      <path d="M4 16L17 3" stroke={T} strokeWidth="1.6" />
    </>
  ),
  layerUp: (
    <>
      <path d="M1 11l8-5v10z" fill={L} />
      <path d="M9 10l5-5 5 5h-3v6h-4v-6z" fill={T} />
    </>
  ),
  layerDown: (
    <>
      <path d="M1 10l8-5v10z" fill={L} />
      <path d="M12 5h4v6h3l-5 5-5-5h3z" fill={T} />
    </>
  ),
  layerAdd: (
    <>
      <path d="M1 12l8-5 6 4-8 5z" fill={L} />
      <path d="M15 2v8M11 6h8" stroke={T} strokeWidth="2.4" />
    </>
  ),
  layerDot: (
    <>
      <path d="M1 12l8-5 6 4-8 5z" fill={L} />
      <circle cx="15" cy="6" r="4" fill={T} />
    </>
  ),
  tFirst: <path d="M1 3h2v14H1zM11 3v14L4 10zM19 3v14l-7-7z" fill="#b8b8b8" />,
  tPrev: <path d="M3 3h2.4v14H3zM17 3v14L7 10z" fill="#b8b8b8" />,
  tPrevKey: (
    <>
      <path d="M4 0v20" stroke="#999" />
      <rect x="2.5" y="3" width="3" height="14" fill={O} />
      <path d="M18 3v14L8 10z" fill="#b8b8b8" />
    </>
  ),
  tBack: <path d="M17 1v18L3 10z" fill="#b8b8b8" />,
  tPlay: <path d="M3 1v18l14-9z" fill="#c8c8c8" />,
  tNextKey: (
    <>
      <path d="M16 0v20" stroke="#999" />
      <rect x="14.5" y="3" width="3" height="14" fill={O} />
      <path d="M2 3v14l10-7z" fill="#b8b8b8" />
    </>
  ),
  tNext: <path d="M3 3v14l10-7zM14.6 3H17v14h-2.4z" fill="#b8b8b8" />,
  tLast: <path d="M1 3v14l7-7zM9 3v14l7-7zM17 3h2v14h-2z" fill="#b8b8b8" />,
  loop: <path d="M3 9V7h11M11 3l5 4-5 4M17 11v2H6M9 17l-5-4 5-4" fill="none" stroke={L} strokeWidth="1.6" />,
  filmOn: (
    <>
      <rect x="1.5" y="5.5" width="15" height="11" fill="none" stroke={O} strokeWidth="1.6" />
      <path d="M2 9h14M6 9v7M11 9v7" stroke={O} strokeWidth="1.4" />
      <path d="M12 1l7 4-7 4z" fill="#ccc" />
    </>
  ),
  speaker: (
    <>
      <path d="M1 7h4l6-5v16l-6-5H1z" fill={L} />
      <path d="M14 6c2 2 2 6 0 8M17 4c3 3 3 9 0 12" fill="none" stroke={L} />
    </>
  ),
  cacheTime: (
    <>
      <path d="M3 14A8 8 0 0 1 13 3M17 6a8 8 0 0 1-10 11" fill="none" stroke={L} strokeWidth="1.3" />
      <path d="M10 5v7M7 10h6" stroke={O} strokeWidth="2" />
    </>
  ),
  runner: (
    <>
      <circle cx="4" cy="4" r="2.5" fill="none" stroke={L} strokeWidth="1.4" />
      <circle cx="13" cy="5" r="2" fill={O} />
      <path d="M5 11l4-3 4 1 2 3 3 0M11 9l-2 5 3 2v4M9 14l-3 4H3" fill="none" stroke={O} strokeWidth="2" />
    </>
  ),
  script: (
    <>
      <rect x="1" y="1" width="18" height="18" fill="#aaa" />
      <path d="M1 4.5h18" stroke="#444" strokeWidth=".8" />
      <text x="10" y="15" textAnchor="middle" fontSize="9.5" fontWeight="700" fontFamily="Liberation Mono" fill="#444">{"{;}"}</text>
    </>
  ),
  outIcon: (
    <>
      <rect x="3" y="3" width="14" height="14" fill="none" stroke="#5f5f5f" strokeWidth="1.5" strokeDasharray="3 2" />
      <path d="M1 5l3 3M19 5l-3 3M1 15l3-3M19 15l-3-3" stroke="#5f5f5f" strokeWidth="1.5" />
    </>
  ),
  camOut: (
    <>
      <rect x=".5" y="5" width="13" height="10" fill="#d0d0d0" />
      <path d="M14.500 10l5-5v10z" fill="#d0d0d0" />
    </>
  ),
  poly: <path d="M10 3l4 3-4 3-4-3zM4.500 7l4 3-4 3-4-3zM15.500 7l4 3-4 3-4-3zM10 11l4 3-4 3-4-3z" fill="#bdbdbd" />,
  chev: <path d="M3 13l7-7 7 7" fill="none" stroke="#eee" strokeWidth="2" />,
  mic: (
    <>
      <rect x="7" y="1" width="6" height="12" rx="3" fill="none" stroke="#35d8d0" strokeWidth="1.3" />
      <path d="M3.5 9a6.5 6.5 0 0 0 13 0M10 15.5V19M6 19h8" fill="none" stroke="#35d8d0" strokeWidth="1.3" />
    </>
  ),
  wifi: (
    <>
      <path d="M1 8c5-5 13-5 18 0M4 11c3.5-3 8.5-3 12 0M7 14c2-1.5 4-1.5 6 0" fill="none" stroke="#eee" strokeWidth="1.4" />
      <circle cx="10" cy="17" r="1.5" fill="#eee" />
    </>
  ),
  vol: (
    <>
      <path d="M2 7h3l5-4v14l-5-4H2z" fill="none" stroke="#eee" strokeWidth="1.2" />
      <path d="M13 7c1.4 2 1.4 4 0 6M15.5 5c2.4 3 2.4 7 0 10" fill="none" stroke="#eee" strokeWidth="1.2" />
    </>
  ),
  batt: (
    <>
      <rect x="1" y="6" width="16" height="10" rx="1.5" fill="none" stroke="#eee" strokeWidth="1.2" />
      <rect x="2.5" y="7.5" width="9" height="7" fill="#eee" />
      <rect x="17.5" y="9" width="2" height="4" fill="#eee" />
      <path d="M6 1L3 7h3L4 11" fill="none" stroke="#eee" strokeWidth="1.2" />
    </>
  ),
};

const Ico = ({ n, s = 18 }) => (
  <svg width={s} height={s} viewBox="0 0 20 20" style={{ display: "block", flex: "none" }}>
    {ICONS[n]}
  </svg>
);

const BOX = {
  arrow: <path d="M10 3l17 17-7.5 1 5 11-4.5 2-5-11.5L10 28z" fill={L} />,
  lasso: (
    <>
      <ellipse cx="14" cy="17" rx="12" ry="9" transform="rotate(-28 14 17)" fill="none" stroke={T} strokeWidth="2.2" strokeDasharray="5 3" />
      <path d="M15 13v16l4-3.5 3 6 3-1.500-3-6h6z" fill={L} />
    </>
  ),
  paint: (
    <>
      <ellipse cx="14" cy="22" rx="12" ry="9" transform="rotate(28 14 22)" fill="none" stroke={T} strokeWidth="2.2" strokeDasharray="5 3" />
      <path d="M31 3l2 2-13 13c-2 3-6 4-9 3 3-2 3-5 5-7z" fill={L} />
    </>
  ),
  move: (
    <>
      <rect x="11.5" y="11.5" width="13" height="13" fill={L} />
      <path d="M18 3l5 5H13zM18 33l-5-5h10zM3 18l5-5v10zM33 18l-5 5V13z" fill="none" stroke="#7fd0dc" strokeWidth="1.2" />
      <path d="M18 4l3.5 3.5h-7zM18 32l-3.5-3.5h7z" fill={T} />
    </>
  ),
  rotate: (
    <>
      <path d="M18 8l9 10-9 10-9-10z" fill={L} />
      <path d="M31 17A13.5 13.5 0 1 0 18 32" fill="none" stroke={T} strokeWidth="2.2" />
      <path d="M28 17h6l-3 5z" fill={T} />
    </>
  ),
  scale: (
    <>
      <rect x="8" y="6" width="24" height="24" fill="none" stroke={T} strokeWidth="1.4" strokeDasharray="3.6 2.4" />
      <rect x="8" y="19" width="11" height="11" fill={L} />
      <path d="M18 15h6v6" fill="none" stroke={T} strokeWidth="1.4" />
    </>
  ),
  single: (
    <>
      <rect x="6" y="6" width="24" height="24" fill="none" stroke={L} strokeWidth="1.3" />
      <path d="M18 6v24M6 18h24" stroke={L} strokeWidth="1.3" />
      <path d="M12 5v27" stroke="#e8923a" strokeWidth="1.4" strokeDasharray="6 2.5" />
    </>
  ),
  persp: (
    <>
      <rect x="4.5" y="4.5" width="27" height="27" fill="#d0d0d0" stroke="#444" strokeWidth="3" />
      <rect x="3" y="3" width="30" height="30" fill="none" stroke="#bbb" strokeWidth="1" />
      <path d="M18 9l5 4-5 4-5-4zM10 15l5 4-5 4-5-4zM26 15l5 4-5 4-5-4zM18 21l5 4-5 4-5-4z" fill="#444" />
    </>
  ),
  four: (
    <>
      <path d="M4.500 4.500h13v13h-13zM4.500 19.500h13v13h-13zM19.500 19.500h13v13h-13z" fill="none" stroke={L} strokeWidth="1.2" />
      <path d="M11 7v8M7 11h8M11 22v8M7 26h8M26 22v8M22 26h8" stroke={L} />
      <rect x="19" y="4" width="14" height="14" fill={L} />
      <path d="M26 7l4 3.500-4 3.500-4-3.500z" fill="#444" />
    </>
  ),
  two: (
    <>
      <rect x="4.500" y="3.500" width="13" height="29" fill="none" stroke={L} strokeWidth="1.2" />
      <path d="M11 13v10M7 18h8" stroke={L} />
      <rect x="19" y="3" width="14" height="30" fill={L} />
      <path d="M26 15l4 3.500-4 3.500-4-3.500z" fill="#444" />
    </>
  ),
  out: (
    <>
      <rect x="4" y="4" width="28" height="28" fill="none" stroke="#ddd" strokeWidth="1.4" />
      <rect x="6.500" y="7" width="4" height="4" fill="#ddd" />
      <path d="M9 11v14h3M9 17h3M9 24h3M11 9h17M16 15h14M16 21h10M16 27h14" stroke="#ddd" fill="none" strokeWidth="1.2" />
      <path d="M12 13.500h4v4h-4zM12 19.500h4v4h-4zM12 25h4v4h-4z" fill="#ddd" />
    </>
  ),
  search: (
    <>
      <circle cx="15" cy="15" r="9.500" fill="none" stroke="#c8c8c8" strokeWidth="1.8" />
      <path d="M22 22l9 9" stroke="#c8c8c8" strokeWidth="2.4" />
    </>
  ),
};

const BoxIco = ({ n, s = 36 }) => (
  <svg width={s} height={s} viewBox="0 0 36 36" style={{ display: "block" }}>
    {BOX[n]}
  </svg>
);

const MayaLogo = ({ w = 30, h = 32 }) => (
  <svg width={w} height={h} viewBox="0 0 30 32" style={{ display: "block", flex: "none" }}>
    <path d="M0 5L5 0v26l-5 3z" fill="#1f7ea8" />
    <path d="M3 0h26v32H5z" fill="#30a8d6" />
    <path d="M3 21h26v11H5z" fill="#1a5674" />
    <text x="16" y="16" textAnchor="middle" fontFamily="Open Sans" fontSize="15" fontWeight="700" fill="#fff">M</text>
    <text x="16" y="29" textAnchor="middle" fontFamily="Open Sans" fontSize="7" fontWeight="700" fill="#d6e8ef">AYA</text>
  </svg>
);

const Icons = ({ list, w, h, iconSize, activeW, activeH }) =>
  list.map((name, i) => {
    const on = name.endsWith("*");
    const key = name.replace("*", "");
    return (
      <Tool key={i} $w={w} $h={h}>
        {on ? (
          <ActiveBack $w={activeW} $h={activeH}>
            <Ico n={key} s={iconSize} />
          </ActiveBack>
        ) : (
          <Ico n={key} s={iconSize} />
        )}
      </Tool>
    );
  });

const MENU = ["File", "Edit", "Create", "Select", "Modify", "Display", "Windows", "Mesh", "Edit Mesh", "Mesh Tools", "Mesh Display", "Curves", "Surfaces", "Deform", "UV", "Generate", "Cache", "Arnold", "Help"];

const ROWS = [
  ...["persp", "top", "front", "side"].map((t) => ({ t, dim: true })),
  ...[1, 2, 3, 4, 5, 6].map((n) => ({ t: "pCube" + n })),
  { t: "pCylinder1" },
  { t: "pCube7" },
  ...[2, 3, 4, 5, 6].map((n) => ({ t: "pCylinder" + n })),
  ...Array.from({ length: 20 }, (_, i) => ({ t: "pCube" + (i + 8) })),
];

const TICKS = Array.from({ length: 25 }, (_, i) => i * 5);

/* viewport floor grid: horizontals are where the picture has them, the rest follows the vanishing point */
const GRID_Y = [635.3, 638, 641.3, 644.7, 648, 651.3, 655.3, 660, 664.7, 669.3, 674.3, 679.3, 684.7, 691, 697.3, 704, 711.3, 720, 728.3, 738.3, 748.3, 760.3, 772.3, 786.3, 802.3];
const VX = 977;
const VY = 510;
const FRONT = 802.3;
const project = (xFront, y) => VX + ((xFront - VX) * (y - VY)) / (FRONT - VY);
const GRID_X = Array.from({ length: 25 }, (_, i) => 803.3 + 72.6 * (i - 11));

const Scene = () => (
  <svg width="1320" height="780" viewBox="316 122 1320 780">
    <defs>
      <linearGradient id="wall" x1="0" y1="0" x2="1" y2="1">
        <stop offset="0" stopColor="#a8a8a8" />
        <stop offset="1" stopColor="#9a9a9a" />
      </linearGradient>
      <radialGradient id="jar" cx=".47" cy=".42" r=".6">
        <stop offset="0" stopColor="#ababab" />
        <stop offset=".5" stopColor="#8a8a8a" />
        <stop offset="1" stopColor="#585858" />
      </radialGradient>
      <linearGradient id="cup" x1="0" y1="0" x2="1" y2="0">
        <stop offset="0" stopColor="#6e6e6e" />
        <stop offset=".5" stopColor="#b0b0b0" />
        <stop offset="1" stopColor="#7a7a7a" />
      </linearGradient>
    </defs>

    {GRID_X.map((x) => (
      <line key={x} x1={x} y1={FRONT} x2={project(x, 635.3)} y2={635.3} stroke="#4b4b4b" />
    ))}
    {GRID_Y.map((y) => (
      <line
        key={y}
        x1={project(GRID_X[0], y)}
        x2={project(GRID_X[24], y)}
        y1={y}
        y2={y}
        stroke="#484848"
        strokeWidth={y === 684.7 ? 2 : 1}
        shapeRendering="crispEdges"
      />
    ))}

    {/* the shop */}
    <path d="M737 383l31 17h14v267H737z" fill="#636363" />
    <rect x="737" y="660" width="5" height="7" fill="#a0a0a0" />
    <rect x="782" y="375" width="340" height="237" fill="url(#wall)" />
    <path d="M773 356h346v19H797z" fill="#a6a6a6" />
    <path d="M797 375h324" stroke="#111" strokeWidth="1" />
    <path d="M736 328l67.5 50v22H768l-31-17z" fill="#000" />

    <rect x="752" y="410" width="8" height="195" fill="#a8a8a8" />
    <rect x="750" y="407" width="11" height="4" fill="#6b6b6b" />
    <rect x="778" y="600" width="7" height="12" fill="#a8a8a8" />
    <path d="M760 407l46.500 22v158L760 608z" fill="#000" />

    <rect x="696" y="355" width="34" height="338" fill="#a2a2a2" />
    <path d="M730 355h7v333l-7 5z" fill="#000" />
    <rect x="687" y="328" width="49" height="27" fill="#a6a6a6" />
    <path d="M687 355h9v3z" fill="#222" />

    <rect x="944" y="468" width="35" height="144" fill="#5c5c5c" />
    <path d="M923.500 479v114M995.500 479v114M1073.500 468v11M1074.500 518v15M1075.500 573v16" stroke="#000" />
    <path d="M866 589.500h53M1000 589.500h52.500" stroke="#444" />

    <rect x="1125" y="370" width="21" height="242" fill="#a4a4a4" />
    <rect x="1146" y="463" width="6" height="149" fill="#a2a2a2" />
    <path d="M1118 357l4.500-5v18l3 6v78h-4v-78l-3.500-1z" fill="#000" />
    <path d="M1121 463h5v57h-5zM1121 527h5v46h-5zM1121 582h5v30h-5z" fill="#000" />
    <rect x="1122" y="350" width="29" height="20" fill="#a6a6a6" />
    <path d="M1125 370h21l-2 2h-17z" fill="#333" />
    <path d="M1148.500 393h15l-1.500 15h-12z" fill="url(#cup)" />
    <rect x="1104" y="454" width="86" height="9" fill="#a6a6a6" />
    <path d="M1116 463h71" stroke="#444" />
    <path d="M1104.500 463v149M1138.500 463v112M1143.500 463v149" stroke="#000" />
    <path d="M1100 456h4v8h-4zM1104 521h4v6h-4zM1104 575h4v7h-4z" fill="#000" />
    <rect x="1116" y="574" width="28" height="2" fill="#666" />

    <path d="M1159.500 598l59.500 15h-59.500z" fill="#000" />
    <path d="M1183 600l36 13h-10l-26-9z" fill="#444" />

    {/* jars */}
    <path d="M806 604h35l2 9h-25v27l-8-22z" fill="url(#jar)" />
    <rect x="804" y="602" width="38" height="4" rx="2" fill="#9a9a9a" />
    <path d="M811 603.500h8M826 603.500h9" stroke="#222" />

    {/* floor under the bench and the plate */}
    <rect x="737" y="667" width="460" height="27" fill="#383838" />
    <rect x="684" y="693" width="542" height="35" fill="#989898" />
    <path d="M684 728.500h542" stroke="#454545" />

    <path d="M746 617C743 628 738 639 738 648C739 660 746 676 750.600 688H803.600C808 676 816 660 817 648C817 639 812 628 810 617z" fill="url(#jar)" />
    <rect x="745" y="612" width="66" height="6" rx="3" fill="#8c8c8c" />
    <path d="M752 614.500h11M784 614.500h12" stroke="#111" />

    {/* bench */}
    <rect x="818" y="613" width="401" height="54" fill="url(#wall)" />
    <rect x="818" y="612" width="401" height="2" fill="#484848" />
    <rect x="818" y="667" width="20" height="25" fill="#a2a2a2" />
    <rect x="838" y="667" width="2.500" height="25" fill="#000" />
    <rect x="841" y="667" width="7" height="11" fill="#a2a2a2" />
    <rect x="1077" y="667" width="13" height="12" fill="#a2a2a2" />
    <rect x="1192" y="667" width="27" height="25" fill="#a2a2a2" />
    <rect x="1188" y="667" width="4" height="25" fill="#000" />

    {/* axis gizmo */}
    <path d="M341.500 863v13" stroke="#2bd02b" />
    <path d="M341 876h14" stroke="#e02020" />
    <path d="M339 872h4" stroke="#2030e0" strokeWidth="2" />
    <text x="338.500" y="861" fontFamily="Open Sans" fontSize="10" fontWeight="700" fill="#2bd02b">y</text>
    <text x="354" y="875" fontFamily="Open Sans" fontSize="10" fontWeight="700" fill="#e02020">x</text>
    <text x="339" y="876" fontFamily="Open Sans" fontSize="7" fontWeight="700" fill="#2030e0">z</text>
  </svg>
);

export default function App() {
  return (
    <Page>
      <GlobalStyle />
      <TitleBar>
        <MayaLogo w={15} h={18} />
        <TitleText>
          {"Tortise_Detail1.ma* - Autodesk MAYA 2024.2: C:\\Users\\Kai Holbrook\\Documents\\GitHub\\Modeling-Surfacing--DAGV-1200\\Labs\\Lab12\\Tortise_Detail1.ma"}
        </TitleText>
        <WinControls>
          <svg width="10" height="10" viewBox="0 0 10 10"><path d="M0 5.500h10" stroke="#111" /></svg>
          <svg width="11" height="11" viewBox="0 0 11 11"><path d="M.5 2.500h7.500v8H.5zM2.500 2.500V.5h8v7.500H8" fill="none" stroke="#111" /></svg>
          <svg width="11" height="11" viewBox="0 0 11 11"><path d="M.5.5l10 10M10.500.5l-10 10" stroke="#111" /></svg>
        </WinControls>
      </TitleBar>

      <MenuBar>
        <Ico n="home" s={17} />
        <Menus $ml={12}>
          {MENU.map((m) => (
            <span key={m}>{m}</span>
          ))}
        </Menus>
        <WorkspaceLabel>Workspace:</WorkspaceLabel>
        <Dropdown $w={191} $h={19} $ml={5}>
          <DropLabel>General*</DropLabel>
          <DropCaret><Caret /></DropCaret>
        </Dropdown>
        <Lock><Ico n="lock" s={18} /></Lock>
      </MenuBar>

      <Toolbar>
        <Grip $ml={4} />
        <Dropdown $w={97} $ml={7}>
          <DropLabel>Modeling</DropLabel>
          <DropCaret><Caret /></DropCaret>
        </Dropdown>
        <Sep $ml={11} />
        <Group $ml={10}><Icons list={["fnew", "fopen", "fsave", "undo", "redo"]} iconSize={18} /></Group>
        <Notch $ml={5} />
        <Sep $ml={18} />
        <Group $ml={10}><Icons list={["selHier", "selObj*", "selComp"]} iconSize={20} activeW={22} activeH={22} /></Group>
        <Notch $ml={6} />
        <Sep $ml={18} />
        <Group $ml={9}><Icons list={["snapGrid", "snapCurve", "snapPoint", "snapView", "snapSurf", "snapLive"]} iconSize={21} /></Group>
        <Caret $ml={5} $s={4} $c="#8a8a8a" />
        <FieldOutline $w={99} $ml={6}>No Live Surface</FieldOutline>
        <Sep $ml={13} />
        <Caret $ml={14} $s={4} $c="#8a8a8a" />
        <FieldOutline $w={99} $ml={5}>Symmetry: Off</FieldOutline>
        <Sep $ml={12} />
        <Group $ml={10}><Icons list={["frameIn", "frameOut", "history*"]} iconSize={18} activeW={22} activeH={22} /></Group>
        <Sep $ml={9} />
        <Group $ml={10}>
          <Icons list={["clapEye", "clapBlank", "clapIpr", "clapGear", "ringT", "ringX", "clapTeal", "wrench", "pause"]} iconSize={19} />
        </Group>
        <Notch $ml={5} />
        <Sep $ml={18} />
        <Profile>
          <Ico n="person" s={14} />
          <ProfileName>Zane Holbrook</ProfileName>
          <Caret />
          <Clock><Ico n="clock" s={15} /></Clock>
          <ClockCount>29</ClockCount>
        </Profile>
        <Group $ml={471}><Icons list={["modelRel", "human", "sliders", "tools", "layersOn*"]} iconSize={19} activeW={22} activeH={24} /></Group>
      </Toolbar>
      <TopLine />

      <Main>
        <Toolbox>
          <HGrip $w={36} />
          <BoxSlot $h={37} $mt={3}><BoxIco n="arrow" s={30} /></BoxSlot>
          <BoxSlot $h={37}><BoxIco n="lasso" /></BoxSlot>
          <BoxSlot $h={37}><BoxIco n="paint" /></BoxSlot>
          <BoxSlot $h={37} $on><BoxIco n="move" /></BoxSlot>
          <BoxSlot $h={37}><BoxIco n="rotate" /></BoxSlot>
          <BoxSlot $h={37}><BoxIco n="scale" /></BoxSlot>
          <BoxSlot $h={37} $mt={37}><BoxIco n="single" s={32} /></BoxSlot>
          <BoxRule $mt={5} />
          <BoxSlot $mt={5}><BoxIco n="persp" s={30} /></BoxSlot>
          <BoxSlot><BoxIco n="four" s={32} /></BoxSlot>
          <BoxSlot $mt={2}><BoxIco n="two" s={32} /></BoxSlot>
          <BoxSlot $mt={1} $on><BoxIco n="out" /></BoxSlot>
          <BoxRule $mt={5} />
          <BoxSlot $mt={3}><BoxIco n="search" s={26} /></BoxSlot>
          <BoxLogo><MayaLogo /></BoxLogo>
        </Toolbox>

        <Outliner>
          <PanelTabs $h={17} $pl={2}>
            <PanelTab $w={63} $on>Outliner</PanelTab>
          </PanelTabs>
          <OutlinerBody>
            <PanelMenu $pl={11}>
              <Menus><span>Display</span><span>Show</span><span>Help</span></Menus>
            </PanelMenu>
            <SearchRow>
              <Ico n="outIcon" s={16} />
              <SearchField>
                <span>Search...</span>
                <Caret $c="#c8c8c8" />
              </SearchField>
            </SearchRow>
            <List>
              {ROWS.map((r) => (
                <Row key={r.t} $dim={r.dim}>
                  <Ico n={r.dim ? "camOut" : "poly"} s={16} />
                  <RowLabel>{r.t}</RowLabel>
                </Row>
              ))}
              <VScroll>
                <ArrowUp />
                <VThumb />
                <ArrowDown />
              </VScroll>
              <HScroll>
                <ArrowLeft />
                <HThumb $w={218} />
                <ArrowRight />
              </HScroll>
            </List>
            <HGrip $w={85} $m="2px 0 0 89px" />
          </OutlinerBody>
        </Outliner>

        <Viewport>
          <ViewMenu>
            <Menus $gap={16}>
              {["View", "Shading", "Lighting", "Show", "Renderer", "Panels"].map((m) => (
                <span key={m}>{m}</span>
              ))}
            </Menus>
          </ViewMenu>
          <ViewBar>
            <Sep $w={2} $h={10} />
            <Group $ml={4}><Icons list={["aBtn", "frame", "dimBox", "dimCircle", "dimStack"]} w={19} h={20} iconSize={17} /></Group>
            <Sep $w={2} $h={10} $ml={4} />
            <Group $ml={4}><Icons list={["cam", "camLock", "camGear", "bookmark", "persp", "focus", "pen"]} w={19} h={20} iconSize={16} /></Group>
            <Sep $w={2} $h={10} $ml={4} />
            <Group $ml={5}>
              <Icons list={["gridB*", "film", "resGate", "darkBox", "axisBox", "picBox", "tBox"]} w={19} h={20} iconSize={15} activeW={18} activeH={20} />
            </Group>
            <Sep $w={2} $h={10} $ml={4} />
            <Group $ml={7}>
              <Icons list={["wire", "shade*", "halfDots", "boxDots", "checker", "bulb", "shadow"]} w={19} h={20} iconSize={16} activeW={18} activeH={20} />
            </Group>
            <Sep $w={2} $h={10} $ml={2} />
            <Group $ml={5}><Icons list={["ball", "ball2", "ringSplit", "xray"]} w={19} h={20} iconSize={16} /></Group>
            <Sep $w={2} $h={10} $ml={4} />
            <Group $ml={6}><Icons list={["dashCursor"]} w={19} h={20} iconSize={15} /></Group>
            <Sep $w={2} $h={10} $ml={4} />
            <Group $ml={4}><Icons list={["isoA", "isoB", "isoC"]} w={19} h={20} iconSize={16} /></Group>
            <Sep $w={2} $h={10} $ml={4} />
            <Group $ml={6}><Icons list={["aperture"]} w={19} h={20} iconSize={14} /></Group>
            <NumField $ml={2}>0.00</NumField>
            <Group $ml={3}><Icons list={["half"]} w={19} h={20} iconSize={13} /></Group>
            <NumField $ml={1}>1.00</NumField>
            <Group $ml={4}><Icons list={["onBtn*"]} w={17} h={20} iconSize={15} activeW={17} activeH={18} /></Group>
            <Dropdown $w={198} $h={17} $ml={3}>
              <DropLabel>ACES 1.0 SDR-video (sRGB)</DropLabel>
              <DropCaret><Caret /></DropCaret>
            </Dropdown>
          </ViewBar>
          <Canvas>
            <Scene />
            <ViewCube>FRONT</ViewCube>
            <ViewName>persp -Z</ViewName>
          </Canvas>
        </Viewport>

        <RightPanel>
          <ChannelBox>
            <ChannelIcons>
              <Ico n="triAxis" s={14} />
              <Ico n="tealArc" s={14} />
              <Ico n="corner" s={14} />
            </ChannelIcons>
            <PanelMenu $pl={13} $h={24}>
              <Menus $gap={16}><span>Channels</span><span>Edit</span><span>Object</span><span>Show</span></Menus>
            </PanelMenu>
            <ChannelHint>
              Select objects in the scene to view,<br />
              edit and set keyframes on channels<br />
              (attributes)
            </ChannelHint>
            <HGrip $w={85} $m="auto 0 8px 90px" />
          </ChannelBox>
          <LayerBox>
            <PanelTabs $h={18} $pl={2}>
              <PanelTab $w={58} $on>Display</PanelTab>
              <PanelTab $w={46}>Anim</PanelTab>
            </PanelTabs>
            <LayerBody>
              <PanelMenu $pl={10} $h={22}>
                <Menus><span>Layers</span><span>Options</span><span>Help</span></Menus>
              </PanelMenu>
              <LayerIcons>
                <Ico n="layerUp" s={15} />
                <Ico n="layerDown" s={15} />
                <Ico n="layerAdd" s={15} />
                <Ico n="layerDot" s={15} />
              </LayerIcons>
              <LayerList>
                <HScroll $r={0} $b={7} $gap={7}>
                  <ArrowLeft />
                  <HThumb $w={152} />
                </HScroll>
              </LayerList>
            </LayerBody>
          </LayerBox>
        </RightPanel>

        <VTabs>
          <VTab $on $h={156} $pt={10}>Channel Box / Layer Editor</VTab>
          <VTab $h={104} $pt={12}>Attribute Editor</VTab>
          <VTab $h={110} $pt={13}>Modeling Toolkit</VTab>
        </VTabs>
      </Main>

      <TimeRow>
        <Grip $ml={4} $h={46} />
        <Ruler>
          <RulerLine $h={8} $bg="#444">
            {TICKS.map((f) => <StripCell key={f} />)}
          </RulerLine>
          <RulerLine $h={32} $bg="#2b2b2b">
            {TICKS.map((f) => <RulerCell key={f}>{f}</RulerCell>)}
          </RulerLine>
          <RulerLine $h={8} $bg="#444">
            {TICKS.map((f) => <StripCell key={f} $bar />)}
          </RulerLine>
          <CurrentMark />
          <CurrentLabel>0</CurrentLabel>
        </Ruler>
        <FrameField $ml={10} $mt={17} $c="#8fb8d8">0</FrameField>
        <Transport>
          <Icons list={["tFirst", "tPrev", "tPrevKey", "tBack", "tPlay", "tNextKey", "tNext", "tLast"]} w={28} h={20} iconSize={15} />
        </Transport>
      </TimeRow>

      <RangeRow>
        <Grip $ml={4} $h={28} />
        <FrameField $ml={10}>0</FrameField>
        <RangeTrack>
          <RangeBar>
            <RangeHandle />
            <RangeValue $m="0 auto 0 10px">0</RangeValue>
            <Grip $h={14} $ml={10} />
            <RangeValue $m="0 8px 0 auto">120</RangeValue>
            <RangeHandle />
          </RangeBar>
        </RangeTrack>
        <FrameField $ml={9}>200</FrameField>
        <Notch $ml={18} />
        <Sep $ml={36} />
        <Caret $ml={23} $s={4} $c="#999" />
        <FieldOutline $w={102} $ml={8} $h={20}>No Character Set</FieldOutline>
        <Caret $ml={14} $s={4} $c="#999" />
        <FieldOutline $w={102} $ml={8} $h={20}>No Anim Layer</FieldOutline>
        <Sep $ml={20} />
        <Dropdown $w={95} $ml={22}>
          <DropLabel>24 fps</DropLabel>
          <DropCaret><Caret /></DropCaret>
        </Dropdown>
        <Tool $ml={13}><Ico n="loop" s={18} /></Tool>
        <Tool $ml={8} $h={23}>
          <ActiveBack $w={23} $h={23}><Ico n="filmOn" s={18} /></ActiveBack>
        </Tool>
        <Sep $ml={19} />
        <Tool $ml={20}><Ico n="speaker" s={18} /></Tool>
        <Tool $ml={5}><Ico n="cacheTime" s={16} /></Tool>
        <Tool $ml={5}><Ico n="runner" s={18} /></Tool>
      </RangeRow>

      <CommandRow>
        <HelpLine>
          <Grip $h={28} />
          <HelpDot>?</HelpDot>
          <HelpText>Move Tool: Select an object to move.</HelpText>
        </HelpLine>
        <Grip $h={28} />
        <MelLabel>MEL</MelLabel>
        <MelInput $w={398} $ml={8} />
        <Grip $h={14} $ml={1} />
        <MelInput $w={617} $ml={1} />
        <Tool $w={20} $ml={10}><Ico n="script" s={20} /></Tool>
      </CommandRow>

      <Taskbar>
        <Weather>
          <svg width="24" height="22" viewBox="0 0 24 22">
            <circle cx="11" cy="9" r="9" fill="#f0a52a" />
            <path d="M5 21a4 4 0 0 1 0-8 6 6 0 0 1 11-1 5 5 0 0 1 3 9z" fill="#b9d6ee" />
          </svg>
          <Badge>3</Badge>
          <WeatherText>
            44°F<br />Partly sunny
          </WeatherText>
        </Weather>
        <StartGrid>
          <StartPane /><StartPane /><StartPane /><StartPane />
        </StartGrid>
        <SearchPill>
          <svg width="14" height="14" viewBox="0 0 14 14">
            <circle cx="5.800" cy="5.800" r="4.800" fill="none" stroke="#eee" strokeWidth="1.4" />
            <path d="M9.500 9.500l4 4" stroke="#eee" strokeWidth="1.6" />
          </svg>
          <PillLabel>Search</PillLabel>
          <svg width="46" height="22" viewBox="0 0 46 22">
            <path d="M2 14a7 7 0 0 1 14 0v5h-3v-6a4 4 0 0 0-8 0v6H2z" fill="#8f8f98" />
            <rect x="15" y="4" width="17" height="11" rx="5" fill="#c8c8d0" />
            <rect x="30" y="8" width="15" height="10" fill="#9fb3c6" />
          </svg>
        </SearchPill>
        <TaskIcons>
          <TaskIcon>
            <svg width="24" height="24" viewBox="0 0 24 24">
              <rect x="8" y="1" width="15" height="15" fill="#f0f0f0" />
              <rect x="1" y="8" width="15" height="15" fill="#6d6d6d" />
              <rect x="8" y="8" width="8" height="8" fill="#bcbcbc" />
            </svg>
          </TaskIcon>
          <TaskIcon>
            <svg width="24" height="24" viewBox="0 0 24 24">
              <defs>
                <linearGradient id="cpA" x1="0" y1="0" x2="1" y2="1">
                  <stop offset="0" stopColor="#2fc4e8" />
                  <stop offset=".5" stopColor="#7a5cf0" />
                  <stop offset="1" stopColor="#f05cb0" />
                </linearGradient>
                <linearGradient id="cpB" x1="0" y1="1" x2="1" y2="0">
                  <stop offset="0" stopColor="#f4b32c" />
                  <stop offset=".5" stopColor="#f0663c" />
                  <stop offset="1" stopColor="#d050d0" />
                </linearGradient>
              </defs>
              <path d="M9 1h7l-6 19c-1 3-8 3-8-1 0-5 3-18 7-18z" fill="url(#cpB)" />
              <path d="M15 23H8l6-19c1-3 8-3 8 1 0 5-3 18-7 18z" fill="url(#cpA)" />
            </svg>
          </TaskIcon>
          <TaskIcon>
            <svg width="24" height="24" viewBox="0 0 24 24">
              <circle cx="14" cy="4.500" r="3.500" fill="#7b83d6" />
              <circle cx="20.500" cy="7" r="2.500" fill="#5d64b8" />
              <path d="M17 9.500h6v7a4 4 0 0 1-5 3.500z" fill="#5d64b8" />
              <path d="M8 9h10v9a5 5 0 0 1-10 0z" fill="#7b83d6" />
              <rect x="1" y="7" width="12" height="12" rx="1" fill="#4b53bc" />
              <text x="7" y="16.500" textAnchor="middle" fontSize="10" fontWeight="700" fontFamily="Open Sans" fill="#fff">T</text>
            </svg>
          </TaskIcon>
          <TaskIcon>
            <svg width="24" height="24" viewBox="0 0 24 24">
              <ellipse cx="12" cy="12" rx="11" ry="11.500" fill="none" stroke="#e0123f" strokeWidth="1.500" />
              <ellipse cx="12" cy="12" rx="6" ry="10.500" fill="none" stroke="#e0123f" strokeWidth="1.500" />
            </svg>
            <TaskDot />
          </TaskIcon>
          <TaskIcon>
            <RoundIcon $bg="linear-gradient(#0f2a52, #1470a8)"><SiSteam size={24} color="#e8eef4" /></RoundIcon>
          </TaskIcon>
          <TaskIcon>
            <RoundIcon $bg="#5865f2"><SiDiscord size={16} color="#fff" /></RoundIcon>
          </TaskIcon>
          <TaskIcon>
            <RoundIcon $bg="#101010"><SiSpotify size={24} color="#1ed760" /></RoundIcon>
          </TaskIcon>
          <TaskIcon><ChromeBall /></TaskIcon>
          <TaskIcon>
            <svg width="24" height="22" viewBox="0 0 24 22">
              <path d="M0 2a2 2 0 0 1 2-2h6l3 3H0z" fill="#c9951f" />
              <rect y="3" width="24" height="19" fill="#f3c83a" />
              <rect x="7" y="14" width="10" height="6" fill="#1e78c8" />
            </svg>
          </TaskIcon>
          <TaskIcon>
            <RoundIcon $bg="#16262a">
              <svg width="14" height="18" viewBox="0 0 14 18">
                <path d="M7 0a6 6 0 0 1 4 10.500L10 18H4l-1-7.500A6 6 0 0 1 7 0z" fill="#56c2b4" />
              </svg>
            </RoundIcon>
            <TaskDot />
          </TaskIcon>
          <TaskIcon $on>
            <MayaLogo w={24} h={26} />
            <TaskDot $on />
          </TaskIcon>
          <TaskIcon>
            <svg width="22" height="24" viewBox="0 0 22 24">
              <defs>
                <linearGradient id="ph" x1="0" y1="0" x2="1" y2="1">
                  <stop offset="0" stopColor="#2670e0" />
                  <stop offset="1" stopColor="#38c8f0" />
                </linearGradient>
              </defs>
              <rect width="22" height="24" rx="3" fill="url(#ph)" />
              <path d="M0 20l9-12 7 9 3-3 3 4v3a3 3 0 0 1-3 3H3a3 3 0 0 1-3-3z" fill="#9fe4fa" />
              <circle cx="16" cy="6" r="2.500" fill="#f27ac0" />
            </svg>
            <TaskDot />
          </TaskIcon>
          <TaskIcon>
            <RoundIcon $bg="#111"><SiObsstudio size={24} color="#e4e4e4" /></RoundIcon>
            <TaskDot />
          </TaskIcon>
        </TaskIcons>
        <Tray $ml={328}><Ico n="chev" s={14} /></Tray>
        <Tray $ml={18}><Ico n="mic" s={16} /></Tray>
        <Tray $ml={15}><Ico n="wifi" s={17} /></Tray>
        <Tray $ml={7}><Ico n="vol" s={17} /></Tray>
        <Tray $ml={7}><Ico n="batt" s={17} /></Tray>
        <TimeBlock>
          7:46 PM<br />4/4/2025
        </TimeBlock>
      </Taskbar>
    </Page>
  );
}
